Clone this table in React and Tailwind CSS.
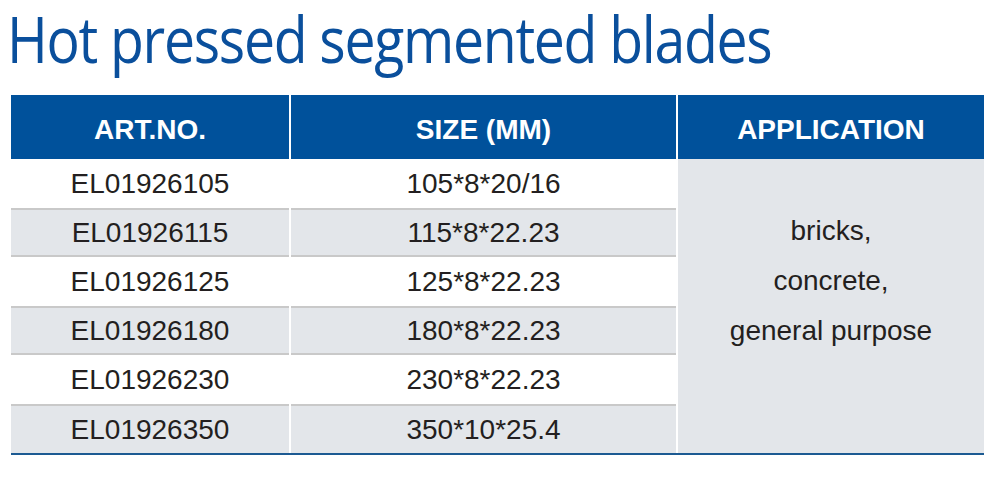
import React from 'react';

const rows = [
  { art: 'EL01926105', size: '105*8*20/16' },
  { art: 'EL01926115', size: '115*8*22.23' },
  { art: 'EL01926125', size: '125*8*22.23' },
  { art: 'EL01926180', size: '180*8*22.23' },
  { art: 'EL01926230', size: '230*8*22.23' },
  { art: 'EL01926350', size: '350*10*25.4' },
];

const App = () => {
  return (
    <div className="w-[1000px] h-[480px] bg-white overflow-hidden">
      <div className="h-[95px] w-[1000px] pl-[7px] pt-[3px]">
        <h1 className="w-max whitespace-nowrap origin-left scale-x-[0.865] font-['Open_Sans',sans-serif] font-medium text-[#0a4f9c] text-[64px] leading-[72px] tracking-[-1.5px]">
          Hot pressed segmented blades
        </h1>
      </div>
      <div className="ml-[11px] w-[973px] grid grid-cols-[278px_385px_306px] gap-x-[2px] border-b-2 border-[#1c5a92] font-['Liberation_Sans',Arial,sans-serif] text-[28px] text-[#231f20]">
        {['ART.NO.', 'SIZE (MM)', 'APPLICATION'].map((h) => (
          <div
            key={h}
            className="h-[64px] pt-[5px] bg-[#00519b] text-white font-bold flex items-center justify-center"
          >
            {h}
          </div>
        ))}
        <div className="col-start-3 row-start-2 row-span-6 bg-[#e3e6ea] pt-[47px] flex flex-col items-center leading-[50px]">
          <span>bricks,</span>
          <span>concrete,</span>
          <span>general purpose</span>
        </div>
        {rows.map((r, i) => {
          const cls =
            i === 5
              ? 'bg-[#e3e6ea] border-t-2 border-[#c9c9c9]'
              : i % 2 === 1
              ? 'bg-[#e3e6ea] border-y-2 border-[#c9c9c9]'
              : 'bg-white';
          return (
            <React.Fragment key={r.art}>
              <div className={`h-[49px] flex items-center justify-center ${cls}`}>{r.art}</div>
              <div className={`h-[49px] flex items-center justify-center ${cls}`}>{r.size}</div>
            </React.Fragment>
          );
        })}
      </div>
    </div>
  );
};

export default App;
